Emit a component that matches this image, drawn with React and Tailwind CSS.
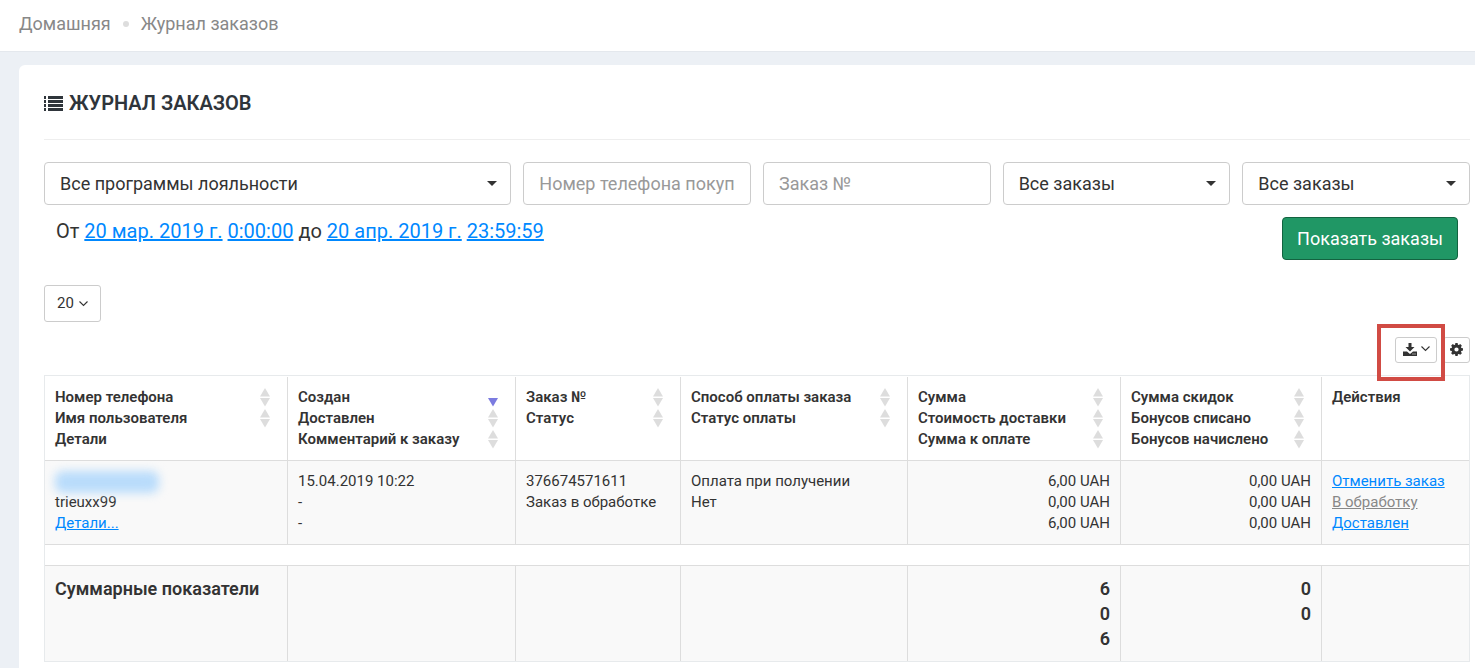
import React from 'react'

const columns = [
    { width: 'w-[243px]', lines: [['Номер телефона', 'both'], ['Имя пользователя', 'both'], ['Детали']] },
    { width: 'w-[228px]', lines: [['Создан', 'desc'], ['Доставлен', 'both'], ['Комментарий к заказу', 'both']] },
    { width: 'w-[165px]', lines: [['Заказ №', 'both'], ['Статус', 'both']] },
    { width: 'w-[227px]', lines: [['Способ оплаты заказа', 'both'], ['Статус оплаты', 'both']] },
    { width: 'w-[213px]', lines: [['Сумма', 'both'], ['Стоимость доставки', 'both'], ['Сумма к оплате', 'both']] },
    { width: 'w-[201px]', lines: [['Сумма скидок', 'both'], ['Бонусов списано', 'both'], ['Бонусов начислено', 'both']] },
    { width: 'w-[147px]', lines: [['Действия']] },
]

const cell = 'border-r border-[#dddddd] p-[10px] align-top last:border-r-0'
const link = 'text-[#0088ff] underline'

const SortIcon = ({ dir }) => (
    <svg width="10" height="19" viewBox="0 0 10 19" className="shrink-0">
        {dir === 'both' && <path d="M5 0L10 8.5H0z" fill="#dddddd" />}
        <path d="M0 10H10L5 18.5z" fill={dir === 'desc' ? '#7b7be0' : '#dddddd'} />
    </svg>
)

const Chevron = ({ className }) => (
    <svg width="9" height="6" viewBox="0 0 9 6" fill="none" stroke="#333333" strokeWidth="1.1" className={className}>
        <path d="M0.5 0.5L4.500 4.500L8.500 0.5" />
    </svg>
)

const Select = ({ label, option, className }) => (
    <div className={`relative ${className || ''}`}>
        <select
            aria-label={label}
            className="block h-[43px] w-full appearance-none rounded border border-[#cccccc] bg-white px-[15px] text-[18px] text-[#333333]"
        >
            <option>{option}</option>
        </select>
        <svg width="10" height="5" viewBox="0 0 10 5" className="pointer-events-none absolute right-[14px] top-[19px]">
            <path d="M0 0H10L5 5z" fill="#333333" />
        </svg>
    </div>
)

const inputClass = 'h-[43px] w-full min-w-0 rounded border border-[#cccccc] bg-white px-[15px] text-[18px] text-[#333333] placeholder:text-[#999999]'

const App = () => {
    return (
        <div className="flex min-h-screen flex-col bg-[#ecf0f5] font-[Roboto,sans-serif] text-[#333333]">
            <nav className="flex h-[52px] items-center gap-3 border-b border-[#e4e8ed] bg-white px-[19px] pb-1 text-[18px] text-[#888888]">
                <a href="#home">Домашняя</a>
                <span className="h-[6px] w-[6px] rounded-full bg-[#dddddd]"></span>
                <a href="#orders">Журнал заказов</a>
            </nav>

            <main className="ml-[19px] mt-[13px] flex-1 rounded-tl-md bg-white pb-1 pl-[25px] pr-[5px]">
                <div className="flex h-[75px] items-center gap-[6px] border-b border-[#eeeeee] pt-[2px] text-[#2f353b]">
                    <svg width="19" height="15" viewBox="0 0 19 15" fill="currentColor">
                        <path d="M0 0h2v3H0zM0 4h2v3H0zM0 8h2v3H0zM0 12h2v3H0zM4 0h15v3H4zM4 4h15v3H4zM4 8h15v3H4zM4 12h15v3H4z" />
                    </svg>
                    <h1 className="text-[20px] font-semibold">ЖУРНАЛ ЗАКАЗОВ</h1>
                </div>

                <form onSubmit={(e) => e.preventDefault()}>
                    <div className="mt-[22px] grid grid-cols-6 gap-3">
                        <Select label="Программа лояльности" option="Все программы лояльности" className="col-span-2" />
                        <input type="text" aria-label="Номер телефона покупателя" placeholder="Номер телефона покупателя" className={inputClass} />
                        <input type="text" aria-label="Заказ №" placeholder="Заказ №" className={inputClass} />
                        <Select label="Статус" option="Все заказы" />
                        <Select label="Оплата" option="Все заказы" />
                    </div>
                    <div className="mt-3 flex items-start justify-between px-3">
                        <p className="text-[20px] leading-7">
                            От <a href="#from" className={link}>20 мар. 2019 г.</a> <a href="#from-time" className={link}>0:00:00</a> до{' '}
                            <a href="#to" className={link}>20 апр. 2019 г.</a> <a href="#to-time" className={link}>23:59:59</a>
                        </p>
                        <button type="submit" className="h-[43px] rounded border border-[#136340] bg-[#209765] px-[14px] text-[18px] text-white">
                            Показать заказы
                        </button>
                    </div>
                </form>

                <div className="relative mt-[25px] w-[57px]">
                    <select aria-label="Строк на странице" className="block h-[37px] w-full appearance-none rounded-[3px] border border-[#cccccc] bg-white px-3 text-[15px]">
                        <option>20</option>
                    </select>
                    <Chevron className="pointer-events-none absolute right-[13px] top-[16px]" />
                </div>

                <div className="mt-[15px] flex justify-end gap-[6px]">
                    <div className="relative">
                        <button type="button" aria-label="Экспорт" className="flex h-[26px] w-[42px] items-center justify-center gap-1 rounded-[3px] border border-[#cccccc] bg-white pb-[2px]">
                            <svg width="14" height="13" viewBox="0 0 14 13" fill="#333333">
                                <path d="M5.500 0h3v4H11.500L7 8.500L2.500 4h3z" />
                                <path fillRule="evenodd" d="M0 8.500h4L7 11L10 8.500H14V13H0zM9.500 10.500v1h1v-1zM11.500 10.500v1h1v-1z" />
                            </svg>
                            <Chevron />
                        </button>
                        <div className="pointer-events-none absolute -left-[18px] -top-[13px] z-10 h-[57px] w-[68px] border-4 border-[#d14b44]"></div>
                    </div>
                    <button type="button" aria-label="Настройки" className="flex h-[26px] w-[27px] items-center justify-center rounded-[3px] border border-[#cccccc] bg-white pb-[2px]">
                        <svg width="13" height="13" viewBox="10 10 492 492" fill="#333333">
                            <path fillRule="evenodd" d="M214 10h84l13 62 34 14 53-35 62 62-35 53 14 34 62 13v84l-62 13-14 34 35 53-62 62-53-35-34 14-13 62h-84l-13-62-34-14-53 35-62-62 35-53-14-34-62-13v-84l62-13 14-34-35-53 62-62 53 35 34-14zM256 176a80 80 0 1 0 0 160a80 80 0 1 0 0-160z" />
                        </svg>
                    </button>
                </div>

                <div className="mt-3 border border-[#e7eaec] pt-px">
                    <table className="w-full table-fixed border-separate border-spacing-0 text-[15px] leading-[21px]">
                        <thead>
                            <tr>
                                {columns.map((col) => (
                                    <th key={col.lines[0][0]} className={`${cell} ${col.width} border-b text-left font-semibold`}>
                                        {col.lines.map(([text, dir]) => (
                                            <div key={text} className="flex items-center justify-between whitespace-nowrap pr-[7px]">
                                                {text}
                                                {dir && <SortIcon dir={dir} />}
                                            </div>
                                        ))}
                                    </th>
                                ))}
                            </tr>
                        </thead>
                        <tbody>
                            <tr className="bg-[#f9f9f9]">
                                <td className={`${cell} border-b`}>
                                    <div className="h-[21px]">
                                        <div className="h-[22px] w-[104px] rounded-lg bg-[#b9dcfb] blur-[5px]"></div>
                                    </div>
                                    <div>trieuxx99</div>
                                    <a href="#details" className={link}>Детали...</a>
                                </td>
                                <td className={`${cell} border-b`}>15.04.2019 10:22<br />-<br />-</td>
                                <td className={`${cell} border-b`}>376674571611<br />Заказ в обработке</td>
                                <td className={`${cell} border-b`}>Оплата при получении<br />Нет</td>
                                <td className={`${cell} border-b text-right`}>6,00 UAH<br />0,00 UAH<br />6,00 UAH</td>
                                <td className={`${cell} border-b text-right`}>0,00 UAH<br />0,00 UAH<br />0,00 UAH</td>
                                <td className={`${cell} border-b`}>
                                    <a href="#cancel" className={link}>Отменить заказ</a><br />
                                    <a href="#process" className="text-[#888888] underline">В обработку</a><br />
                                    <a href="#delivered" className={link}>Доставлен</a>
                                </td>
                            </tr>
                            <tr>
                                <td colSpan={7} className="h-[21px] border-b border-[#dddddd] p-0"></td>
                            </tr>
                        </tbody>
                        <tfoot>
                            <tr className="bg-[#f9f9f9] text-[18px] font-semibold leading-[25px]">
                                <td className={cell}>Суммарные показатели</td>
                                <td className={cell}></td>
                                <td className={cell}></td>
                                <td className={cell}></td>
                                <td className={`${cell} text-right`}>6<br />0<br />6</td>
                                <td className={`${cell} text-right`}>0<br />0</td>
                                <td className={cell}></td>
                            </tr>
                        </tfoot>
                    </table>
                </div>
            </main>
        </div>
    )
}

export default App
